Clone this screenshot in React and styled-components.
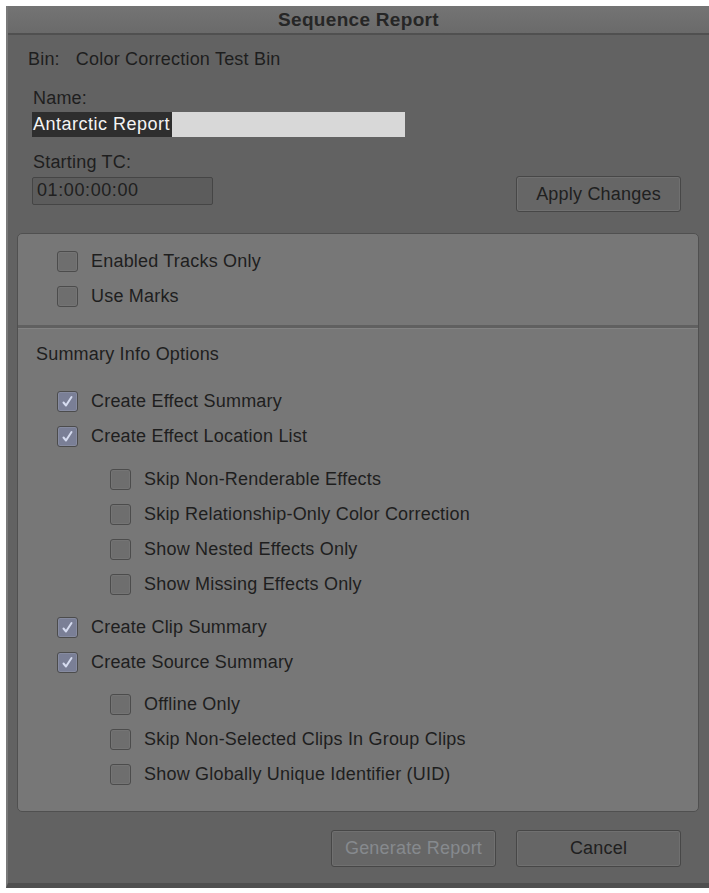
import React from 'react';
import styled, { createGlobalStyle } from 'styled-components';

const GlobalStyle = createGlobalStyle`
  html, body {
    margin: 0;
    padding: 0;
    background: #ffffff;
  }
  body {
    font-family: "Liberation Sans", Arial, sans-serif;
  }
`;

const Window = styled.div`
  margin: 6px 0 0 6px;
  width: 703px;
  height: 882px;
  box-sizing: border-box;
  background: #626262;
  border-left: 2px solid #7a7a7a;
  border-bottom: 5px solid #4f4f4f;
  display: flex;
  flex-direction: column;
  color: #1e1e1e;
  font-size: 18px;
  letter-spacing: 0.2px;
`;

const TitleBar = styled.div`
  height: 27px;
  flex-shrink: 0;
  background: linear-gradient(#747474, #6a6a6a);
  border-bottom: 2px solid #505050;
  display: flex;
  align-items: center;
  justify-content: center;
  font-weight: bold;
  font-size: 19px;
  letter-spacing: 0.3px;
  color: #262626;
`;

const Header = styled.div`
  padding: 14px 28px 0 20px;
  display: flex;
  flex-direction: column;
`;

const Label = styled.div`
  height: 20px;
  line-height: 20px;
  margin-top: ${p => p.$gap || 0}px;
  padding-left: ${p => p.$indent || 0}px;
  white-space: nowrap;
`;

const BinName = styled.span`
  margin-left: 16px;
`;

const NameField = styled.div`
  margin: 4px 0 0 4px;
  width: 373px;
  height: 25px;
  background: #d8d8d8;
  display: flex;
  align-items: stretch;
`;

const Selected = styled.span`
  background: #2e2e2e;
  color: #f4f4f4;
  padding: 0 2px 0 1px;
  line-height: 25px;
  letter-spacing: 0.5px;
`;

const TcRow = styled.div`
  display: flex;
  justify-content: space-between;
  align-items: flex-start;
  margin-top: 4px;
`;

const TcField = styled.div`
  margin: 1px 0 0 4px;
  width: 181px;
  height: 28px;
  box-sizing: border-box;
  background: #5c5c5c;
  border: 1px solid #454545;
  border-radius: 2px;
  padding-left: 4px;
  line-height: 24px;
  color: #202020;
  letter-spacing: 0.6px;
`;

const Button = styled.div`
  width: 165px;
  height: ${p => p.$h || 37}px;
  box-sizing: border-box;
  border: 1px solid #474747;
  border-radius: 3px;
  background: #666666;
  box-shadow: inset 0 0 0 1px #707070;
  display: flex;
  align-items: center;
  justify-content: center;
  color: ${p => (p.$disabled ? '#868a8e' : '#202020')};
`;

const Panel = styled.div`
  margin: 21px 10px 0 9px;
  height: 579px;
  box-sizing: border-box;
  background: #777777;
  border: 1px solid #505050;
  border-radius: 5px;
  padding: 10px 0 0;
  display: flex;
  flex-direction: column;
`;

const Group = styled.div`
  display: flex;
  flex-direction: column;
  padding-left: 39px;
  margin-top: ${p => p.$gap || 0}px;
`;

const Row = styled.div`
  height: 35px;
  display: flex;
  align-items: center;
  gap: 13px;
  padding-left: ${p => (p.$sub ? 53 : 0)}px;
  white-space: nowrap;
`;

const Box = styled.span`
  width: 21px;
  height: 21px;
  box-sizing: border-box;
  flex-shrink: 0;
  border: 1px solid #4c4c4c;
  border-radius: 3px;
  background: ${p => (p.$on ? '#7a7f96' : '#6e6e6e')};
  box-shadow: inset 0 0 0 1px ${p => (p.$on ? '#868ba0' : '#747474')};
  display: flex;
  align-items: center;
  justify-content: center;
`;

const Divider = styled.div`
  margin-top: 11px;
  height: 3px;
  background: #606060;
  border-bottom: 1px solid #838383;
`;

const SectionTitle = styled.div`
  margin-top: 15px;
  padding-left: 18px;
  height: 20px;
  line-height: 20px;
`;

const Footer = styled.div`
  display: flex;
  justify-content: flex-end;
  gap: 20px;
  padding: 18px 28px 0 0;
`;

const Check = ({ on, sub, children }) => (
  <Row $sub={sub}>
    <Box $on={on}>
      {on && (
        <svg width="13" height="13" viewBox="0 0 13 13">
          <path d="M2.5 7.5 L5 10.5 L10.5 2" fill="none" stroke="#d6dcf0" strokeWidth="2" strokeLinecap="round" strokeLinejoin="round" />
        </svg>
      )}
    </Box>
    <span>{children}</span>
  </Row>
);

export default function App() {
  return (
    <>
      <GlobalStyle />
      <Window>
        <TitleBar>Sequence Report</TitleBar>
        <Header>
          <Label>
            Bin:<BinName>Color Correction Test Bin</BinName>
          </Label>
          <Label $gap={19} $indent={5}>Name:</Label>
          <NameField>
            <Selected>Antarctic Report</Selected>
          </NameField>
          <Label $gap={15} $indent={5}>Starting TC:</Label>
          <TcRow>
            <TcField>01:00:00:00</TcField>
            <Button $h={36}>Apply Changes</Button>
          </TcRow>
        </Header>
        <Panel>
          <Group>
            <Check>Enabled Tracks Only</Check>
            <Check>Use Marks</Check>
          </Group>
          <Divider />
          <SectionTitle>Summary Info Options</SectionTitle>
          <Group $gap={20}>
            <Check on>Create Effect Summary</Check>
            <Check on>Create Effect Location List</Check>
          </Group>
          <Group $gap={8}>
            <Check sub>Skip Non-Renderable Effects</Check>
            <Check sub>Skip Relationship-Only Color Correction</Check>
            <Check sub>Show Nested Effects Only</Check>
            <Check sub>Show Missing Effects Only</Check>
          </Group>
          <Group $gap={8}>
            <Check on>Create Clip Summary</Check>
            <Check on>Create Source Summary</Check>
          </Group>
          <Group $gap={7}>
            <Check sub>Offline Only</Check>
            <Check sub>Skip Non-Selected Clips In Group Clips</Check>
            <Check sub>Show Globally Unique Identifier (UID)</Check>
          </Group>
        </Panel>
        <Footer>
          <Button $disabled>Generate Report</Button>
          <Button>Cancel</Button>
        </Footer>
      </Window>
    </>
  );
}
